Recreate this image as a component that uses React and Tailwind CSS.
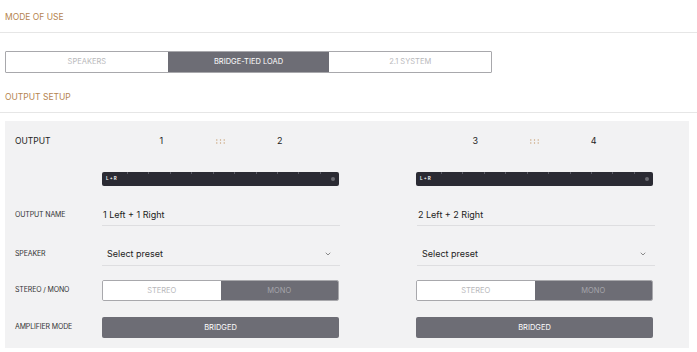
import { ChevronDown } from 'lucide-react';

const font = { fontFamily: 'Inter, "Noto Sans", sans-serif' };

function SectionTitle({ children, className = 'h-[33px] pb-[11px]' }) {
  return (
    <div className={`flex items-end pl-[5px] border-b border-[#e6e6e6] ${className}`}>
      <span className="text-[8.5px] text-[#b5844f] leading-none">{children}</span>
    </div>
  );
}

function Bar() {
  const ticks = [23, 46, 69, 92, 115, 138, 161, 184, 207, 230];
  return (
    <div className="w-[237px] h-[14px] bg-[#2b2b33] rounded-[2px] flex items-center justify-between px-[4px] overflow-hidden">
      <div className="flex items-center h-full">
        <span className="text-[4.5px] text-white font-semibold leading-none">L + R</span>
      </div>
      <div className="flex-1 h-full flex items-start justify-around">
        {ticks.map((t) => (
          <span key={t} className="w-px h-[2px] bg-[#5c5c66]" />
        ))}
      </div>
      <span className="w-[4px] h-[4px] rounded-full bg-[#6b6b72]" />
    </div>
  );
}

function Dots() {
  return (
    <svg width="9" height="5" viewBox="0 0 9 5" className="shrink-0">
      {[0.8, 4.5, 8.2].map((x) =>
        [1, 4].map((y) => <circle key={`${x}-${y}`} cx={x} cy={y} r="0.7" fill="#c9a37a" />)
      )}
    </svg>
  );
}

function ChannelHeader({ a, b }) {
  return (
    <div className="w-[237px] h-[20px] flex items-center justify-evenly text-[9px] text-[#222]">
      <span className="w-0 flex justify-center">{a}</span>
      <span className="w-0 flex justify-center"><Dots /></span>
      <span className="w-0 flex justify-center">{b}</span>
    </div>
  );
}

function Row({ label, left, right, className = '' }) {
  return (
    <div className={`flex items-center ${className}`}>
      <div className="w-[87px] text-[7px] tracking-[-0.02em] text-[#333] shrink-0">{label}</div>
      {left}
      <div className="w-[77px] shrink-0" />
      {right}
    </div>
  );
}

function NameField({ value }) {
  return (
    <div className="w-[238px] h-[21px] flex items-center pl-[1px] border-b border-[#dedee0] text-[9px] text-[#222]">
      {value}
    </div>
  );
}

function SpeakerField() {
  return (
    <div className="w-[238px] h-[24px] flex items-center justify-between pl-[5px] pr-[8px] border-b border-[#dedee0] text-[9px] text-[#222]">
      <span>Select preset</span>
      <ChevronDown size={8} strokeWidth={2} className="text-[#555]" />
    </div>
  );
}

function StereoMono() {
  return (
    <div className="w-[237px] h-[21px] flex rounded-[2px] overflow-hidden border border-[#a8a8ac] text-[7.5px]">
      <div className="flex-1 bg-white text-[#b8b8bb] flex items-center justify-center">STEREO</div>
      <div className="flex-1 bg-[#6d6d75] text-[#a4a4aa] flex items-center justify-center">MONO</div>
    </div>
  );
}

function Bridged() {
  return (
    <div className="w-[237px] h-[21px] rounded-[2px] bg-[#6d6d75] text-white text-[7.5px] flex items-center justify-center">
      BRIDGED
    </div>
  );
}

export default function App() {
  return (
    <div className="w-[697px] h-[352px] bg-white overflow-hidden" style={font}>
      <SectionTitle>MODE OF USE</SectionTitle>

      <div className="pt-[18px] pl-[5px]">
        <div className="w-[487px] h-[22px] flex border border-[#a8a8ac] rounded-[1px] text-[7.5px]">
          <div className="flex-1 bg-white text-[#b8b8bb] flex items-center justify-center">SPEAKERS</div>
          <div className="flex-1 bg-[#6d6d75] text-white flex items-center justify-center">BRIDGE-TIED LOAD</div>
          <div className="flex-1 bg-white text-[#b8b8bb] flex items-center justify-center">2.1 SYSTEM</div>
        </div>
      </div>

      <SectionTitle className="h-[40px] pb-[11px]">OUTPUT SETUP</SectionTitle>

      <div className="ml-[5px] mt-[8px] w-[684px] h-[227px] bg-[#f2f2f3] pl-[10px] pt-[10px]">
        <Row
          label={<span className="text-[8.5px] tracking-normal text-[#222]">OUTPUT</span>}
          left={<ChannelHeader a="1" b="2" />}
          right={<ChannelHeader a="3" b="4" />}
        />
        <Row className="mt-[21px]" label="" left={<Bar />} right={<Bar />} />
        <Row
          className="mt-[19px]"
          label="OUTPUT NAME"
          left={<NameField value="1 Left + 1 Right" />}
          right={<NameField value="2 Left + 2 Right" />}
        />
        <Row className="mt-[16px]" label="SPEAKER" left={<SpeakerField />} right={<SpeakerField />} />
        <Row className="mt-[14px]" label="STEREO / MONO" left={<StereoMono />} right={<StereoMono />} />
        <Row className="mt-[16px]" label="AMPLIFIER MODE" left={<Bridged />} right={<Bridged />} />
      </div>
    </div>
  );
}
